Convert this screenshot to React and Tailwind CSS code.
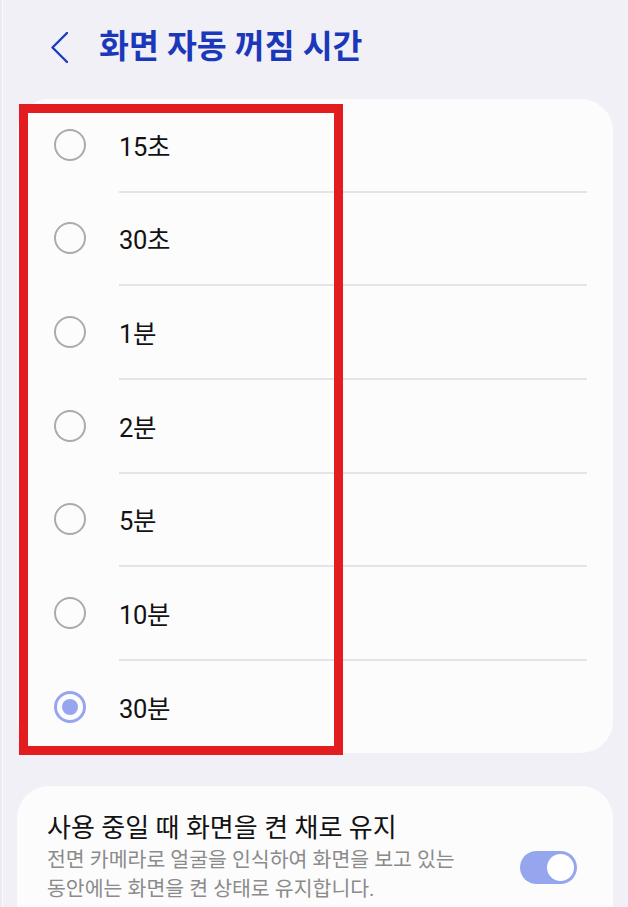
import React from 'react';

const OPTIONS = ['15초', '30초', '1분', '2분', '5분', '10분', '30분'];
const SELECTED = '30분';

function Radio({ checked }) {
  if (checked) {
    return (
      <div className="w-[32px] h-[32px] rounded-full border-[3px] border-[#95a6ef] flex items-center justify-center shrink-0">
        <div className="w-[16px] h-[16px] rounded-full bg-[#95a6ef]" />
      </div>
    );
  }
  return <div className="w-[32px] h-[32px] rounded-full border-2 border-[#ababab] shrink-0" />;
}

function OptionRow({ label, checked }) {
  return (
    <div className="h-[91.67px] flex items-center pl-[37px]">
      <Radio checked={checked} />
      <span className="ml-[33px] mt-[4px] text-[25.5px] text-[#121212] tracking-[-0.3px]">{label}</span>
    </div>
  );
}

export default function App() {
  return (
    <div
      className="relative w-full h-[907px] bg-[#f0f0f6] overflow-hidden"
      style={{ fontFamily: "Roboto, 'Noto Sans CJK KR', sans-serif" }}
    >
      {/* left edge strip */}
      <div className="absolute left-0 top-0 h-full w-[3px] border-r border-[#fbfbfd] bg-[#ebebf1]" />

      {/* Header */}
      <div className="h-[99px] flex items-center pl-[51px] pb-[5px]">
        <svg width="17" height="31" viewBox="0 0 17 31" fill="none" className="shrink-0">
          <polyline points="16,1 1.5,15.5 16,30" stroke="#1d3cbf" strokeWidth="2.4" strokeLinecap="round" strokeLinejoin="round" />
        </svg>
        <h1 className="ml-[31px] text-[32.5px] font-bold text-[#1b38bb]">화면 자동 꺼짐 시간</h1>
      </div>

      {/* Options card */}
      <div className="relative ml-[17px] mr-[15px] rounded-[32px] bg-[#fcfcfd]">
        {OPTIONS.map((opt, i) => (
          <div key={opt}>
            {i > 0 && <div className="h-[2px] bg-[#e4e4e6] ml-[102px] mr-[26px]" />}
            <OptionRow label={opt} checked={opt === SELECTED} />
          </div>
        ))}
        {/* annotation box */}
        <div className="absolute left-[2px] top-[5px] w-[324px] h-[651px] border-[9px] border-[#e31c1f]" />
      </div>

      {/* Keep screen on card */}
      <div className="mt-[33px] ml-[17px] mr-[15px] rounded-[32px] bg-[#fcfcfd] pt-[24px] pl-[30px] pr-[36px] pb-[40px] flex items-center">
        <div className="flex-1">
          <div className="text-[26px] text-[#121212] leading-[36px]">사용 중일 때 화면을 켠 채로 유지</div>
          <div className="text-[20.5px] text-[#8b8b8b] leading-[29px] w-[430px]">
            전면 카메라로 얼굴을 인식하여 화면을 보고 있는 동안에는 화면을 켠 상태로 유지합니다.
          </div>
        </div>
        <div className="w-[57px] h-[33px] rounded-full bg-[#95a6ef] flex items-center justify-end pr-[3px] shrink-0 mt-[22px]">
          <div className="w-[27px] h-[27px] rounded-full bg-white" />
        </div>
      </div>
    </div>
  );
}
